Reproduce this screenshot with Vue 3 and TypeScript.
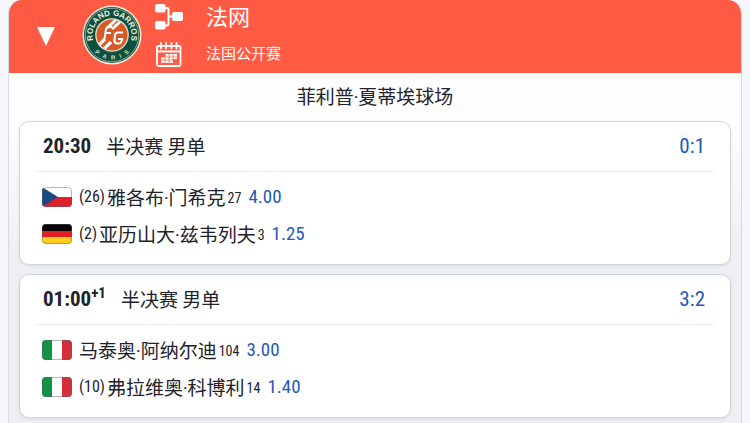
<script setup lang="ts">
import { ref } from 'vue'

type Flag = 'cz' | 'de' | 'it'

interface Player {
  flag: Flag
  seed?: number
  name: string
  rank: number
  odds: string
}

interface Match {
  time: string
  dayOffset?: string
  round: string
  headToHead: string
  players: Player[]
}

const open = ref(true)

const matches: Match[] = [
  {
    time: '20:30',
    round: '半决赛 男单',
    headToHead: '0:1',
    players: [
      { flag: 'cz', seed: 26, name: '雅各布·门希克', rank: 27, odds: '4.00' },
      { flag: 'de', seed: 2, name: '亚历山大·兹韦列夫', rank: 3, odds: '1.25' },
    ],
  },
  {
    time: '01:00',
    dayOffset: '+1',
    round: '半决赛 男单',
    headToHead: '3:2',
    players: [
      { flag: 'it', name: '马泰奥·阿纳尔迪', rank: 104, odds: '3.00' },
      { flag: 'it', seed: 10, name: '弗拉维奥·科博利', rank: 14, odds: '1.40' },
    ],
  },
]
</script>

<template>
  <section class="tournament">
    <header class="banner">
      <button class="toggle" type="button" :aria-expanded="open" @click="open = !open">
        <svg width="18" height="19" viewBox="0 0 18 19"><path d="M0 0H18L9 19Z" fill="#fff" /></svg>
      </button>
      <svg class="logo" width="60" height="60" viewBox="0 0 60 60">
        <defs>
          <path id="arc-top" d="M13.1 39.750A19.500 19.500 0 1 1 46.9 39.750" />
          <path id="arc-bottom" d="M6 35A24.500 24.500 0 0 0 54 35" />
          <clipPath id="ball"><circle cx="30" cy="30" r="15.500" /></clipPath>
        </defs>
        <circle cx="30" cy="30" r="29.500" fill="#f5e9dc" />
        <circle cx="30" cy="30" r="28" fill="#0b513d" />
        <circle cx="30" cy="30" r="26.700" fill="none" stroke="#d9ddcc" stroke-width=".6" />
        <circle cx="30" cy="30" r="16.800" fill="#f1ddca" />
        <circle cx="30" cy="30" r="15.500" fill="#d65a28" />
        <g clip-path="url(#ball)" fill="none" stroke="#fff">
          <path d="M25 23L38 11M30 24L44 11.500" stroke-width="3" />
          <path d="M13 44L23 34M18 48L29 37" stroke-width="3.200" />
          <path d="M30 22H26.500Q24.500 22 24 24L22.500 34M24 28H29" stroke-width="2" />
          <path d="M41 27.500H36Q33.500 27.500 33 30L32.500 35Q32.300 38.500 35.500 38.500H37Q39.500 38.500 40 34H36" stroke-width="2.200" />
        </g>
        <text class="logo-name">
          <textPath href="#arc-top" startOffset="50%" text-anchor="middle">ROLAND GARROS</textPath>
        </text>
        <text class="logo-city">
          <textPath href="#arc-bottom" startOffset="50%" text-anchor="middle">P&nbsp;&nbsp;&nbsp;A&nbsp;&nbsp;&nbsp;R&nbsp;&nbsp;&nbsp;I&nbsp;&nbsp;&nbsp;S</textPath>
        </text>
      </svg>
      <nav class="links">
        <a href="#draw" aria-label="法网">
          <svg width="28" height="26" viewBox="0 0 28 26">
            <g fill="#fff">
              <rect x="0" y="0" width="10.500" height="8.500" rx="2" />
              <rect x="0" y="17" width="10.500" height="8.500" rx="2" />
              <rect x="17" y="8" width="11" height="9" rx="2" />
            </g>
            <path d="M9 4H12Q13.500 4 13.500 6V19.500Q13.500 21.500 12 21.500H9M13.500 12.500H18" fill="none" stroke="#fff" stroke-width="2" />
          </svg>
        </a>
        <a href="#schedule" aria-label="法国公开赛">
          <svg width="28" height="26" viewBox="0 0 28 26">
            <rect x="2" y="4" width="23.500" height="20" rx="1.500" fill="none" stroke="#fff" stroke-width="1.800" />
            <path d="M2 9.500H25.500" stroke="#fff" stroke-width="1.800" />
            <path d="M6 1V6.500M11 1V6.500M16.500 1V6.500M21.500 1V6.500" stroke="#fff" stroke-width="1.800" stroke-linecap="round" />
            <path d="M10 12H22V17H18V21H6V15H10Z" fill="#fff" />
            <path d="M6 15H22M6 18H18M10 12V21M14 12V21M18 12V18" stroke="#ff5a43" stroke-width=".7" />
          </svg>
        </a>
      </nav>
      <div class="titles">
        <h1>法网</h1>
        <p>法国公开赛</p>
      </div>
    </header>

    <div v-if="open" class="body">
      <h2 class="venue">菲利普·夏蒂埃球场</h2>
      <article v-for="match in matches" :key="match.time" class="card">
        <div class="card-head">
          <time class="time">{{ match.time }}<sup v-if="match.dayOffset">{{ match.dayOffset }}</sup></time>
          <span class="round">{{ match.round }}</span>
          <a class="score" href="#h2h">{{ match.headToHead }}</a>
        </div>
        <ul class="players">
          <li v-for="player in match.players" :key="player.name">
            <svg class="flag" width="30" height="20" viewBox="0 0 30 20">
              <g v-if="player.flag === 'cz'">
                <path d="M0 0H30V10H0Z" fill="#fff" />
                <path d="M0 10H30V20H0Z" fill="#df2029" />
                <path d="M0 0L16 10L0 20Z" fill="#1d4884" />
              </g>
              <g v-else-if="player.flag === 'de'">
                <path d="M0 0H30V7H0Z" fill="#080406" />
                <path d="M0 7H30V13H0Z" fill="#e0211f" />
                <path d="M0 13H30V20H0Z" fill="#ffcd1c" />
              </g>
              <g v-else>
                <path d="M0 0H10V20H0Z" fill="#119447" />
                <path d="M10 0H20V20H10Z" fill="#fff" />
                <path d="M20 0H30V20H20Z" fill="#d3303c" />
              </g>
              <rect x=".5" y=".5" width="29" height="19" rx="3.500" fill="none" stroke="#5b5d68" stroke-opacity=".45" />
            </svg>
            <span v-if="player.seed" class="seed">({{ player.seed }})</span>
            <span class="name">{{ player.name }}</span>
            <span class="rank">{{ player.rank }}</span>
            <a class="odds" href="#odds">{{ player.odds }}</a>
          </li>
        </ul>
      </article>
    </div>
  </section>
</template>

<style>
body {
  background: #f6f7fa;
}
</style>

<style scoped>
.tournament {
  margin: 0 8px;
  border: 1px solid #d8dae2;
  border-top: 0;
  border-radius: 14px 14px 0 0;
  overflow: hidden;
  background: #f1f2f5;
  color: #22222a;
  font-family: "Roboto Condensed", Roboto, "Noto Sans CJK SC", sans-serif;
  font-size: 19px;
}

.banner {
  display: flex;
  align-items: center;
  height: 73px;
  padding-left: 28px;
  background: #ff5a43;
  color: #fff;
}

.toggle {
  display: flex;
  padding: 0;
  border: 0;
  background: none;
  cursor: pointer;
}

.logo {
  margin: 0 13px 4px 27px;
}

.logo-name {
  fill: #eef0e4;
  font: 700 8px "Liberation Sans", sans-serif;
}

.logo-city {
  fill: #d9ddcc;
  font: 700 6px "Liberation Sans", sans-serif;
}

.links {
  display: grid;
  gap: 12px;
  padding-bottom: 2px;
}

.links a {
  display: flex;
}

.titles {
  display: grid;
  gap: 8px;
  margin-left: 23px;
  padding-bottom: 6px;
}

h1,
h2,
p {
  margin: 0;
  font-weight: 400;
}

h1 {
  font-size: 22px;
  line-height: 32px;
}

p {
  font-size: 15px;
  line-height: 24px;
}

.body {
  display: grid;
  gap: 9px;
  padding: 0 10px 9px;
  background: linear-gradient(#fefefe 0, #fdfdfe 50px, #eeeff2 190px);
}

.venue {
  margin-bottom: -11px;
  font-size: 19px;
  line-height: 50px;
  text-align: center;
}

.card {
  padding: 0 16px 12px;
  border: 1px solid #d3d5dd;
  border-radius: 10px;
  background: #fff;
  box-shadow: 0 1px 3px #20203018;
}

.card-head {
  display: flex;
  align-items: center;
  height: 47px;
  padding: 0 9px 2px 7px;
  border-bottom: 1px solid #ececf0;
}

.time {
  margin-right: 15px;
  font-size: 21px;
  font-weight: 700;
  line-height: 24px;
}

.time sup {
  font-size: 15px;
  line-height: 1;
}

.score {
  margin-left: auto;
  font-size: 21px;
}

.score,
.odds {
  color: #1c5abc;
  text-decoration: none;
}

.players {
  margin: 0;
  padding: 6px 0 0 6px;
  list-style: none;
}

.players li {
  display: flex;
  align-items: center;
  height: 37px;
}

.flag {
  margin-right: 7px;
  border-radius: 4px;
}

.seed {
  margin-right: 2px;
  font-size: 16px;
}

.rank {
  margin: 3px 7px 0 2px;
  font-size: 14px;
}
</style>
